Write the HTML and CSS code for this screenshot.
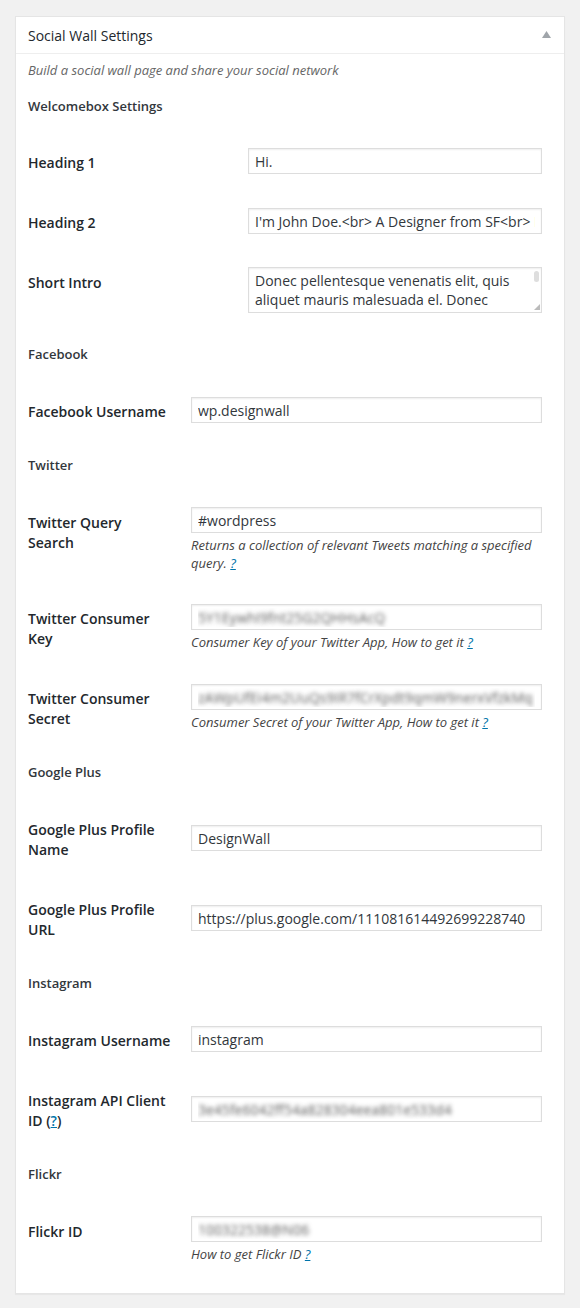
FILE: index.html
```html
<!DOCTYPE html>
<html lang="en">
<head>
<meta charset="utf-8">
<title>Social Wall Settings</title>
<link rel="stylesheet" href="styles.css">
</head>
<body>
<div class="postbox">
  <div class="hndle">
    <span class="hndle-title">Social Wall Settings</span>
    <svg class="toggle" width="9" height="7" viewBox="0 0 9 7" aria-hidden="true"><polygon points="4.5,0 9,7 0,7" fill="#a0a5aa"/></svg>
  </div>
  <div class="inside">
    <p class="intro">Build a social wall page and share your social network</p>

    <h4 class="section first">Welcomebox Settings</h4>
    <div class="form wide">
      <div class="row">
        <label class="th">Heading 1</label>
        <div class="td"><input class="field" type="text" value="Hi."></div>
      </div>
      <div class="row">
        <label class="th">Heading 2</label>
        <div class="td"><input class="field" type="text" value="I'm John Doe.<br> A Designer from SF<br> Living in New York"></div>
      </div>
      <div class="row">
        <label class="th">Short Intro</label>
        <div class="td">
          <div class="area-wrap">
            <textarea class="field area">Donec pellentesque venenatis elit, quis aliquet mauris malesuada el. Donec ullamcorper dictum luctus. Suspendisse potenti. Integer feugiat semper purus, ut pulvinar nulla luctus nec. Curabitur sed magna vitae tellus volutpat hendrerit. Nam tempor augue sit amet lorem tincidunt, vitae faucibus nisl rhoncus.</textarea>
            <span class="thumb"></span>
            <span class="grip"></span>
          </div>
        </div>
      </div>
    </div>

    <h4 class="section">Facebook</h4>
    <div class="form">
      <div class="row">
        <label class="th">Facebook Username</label>
        <div class="td"><input class="field" type="text" value="wp.designwall"></div>
      </div>
    </div>

    <h4 class="section">Twitter</h4>
    <div class="form">
      <div class="row">
        <label class="th">Twitter Query<br>Search</label>
        <div class="td">
          <input class="field" type="text" value="#wordpress">
          <p class="description"><span>Returns a collection of relevant Tweets matching a specified</span><br><span>query.</span> <a href="#">?</a></p>
        </div>
      </div>
      <div class="row">
        <label class="th">Twitter Consumer<br>Key</label>
        <div class="td">
          <input class="field blur" type="text" value="5Y1EywhI9fnt25G2QHHsAcQ">
          <p class="description">Consumer Key of your Twitter App, How to get it <a href="#">?</a></p>
        </div>
      </div>
      <div class="row">
        <label class="th">Twitter Consumer<br>Secret</label>
        <div class="td">
          <input class="field blur" type="text" value="zAWpUfEi4m2UuQs9IR7fCrXpdt9qmW9nerxVfzkMq">
          <p class="description">Consumer Secret of your Twitter App, How to get it <a href="#">?</a></p>
        </div>
      </div>
    </div>

    <h4 class="section">Google Plus</h4>
    <div class="form">
      <div class="row">
        <label class="th">Google Plus Profile<br>Name</label>
        <div class="td"><input class="field" type="text" value="DesignWall"></div>
      </div>
      <div class="row">
        <label class="th">Google Plus Profile<br>URL</label>
        <div class="td"><input class="field" type="text" value="https://plus.google.com/111081614492699228740"></div>
      </div>
    </div>

    <h4 class="section">Instagram</h4>
    <div class="form">
      <div class="row">
        <label class="th">Instagram Username</label>
        <div class="td"><input class="field" type="text" value="instagram"></div>
      </div>
      <div class="row">
        <label class="th">Instagram API Client<br>ID (<a href="#">?</a>)</label>
        <div class="td"><input class="field blur" type="text" value="3e45fe6042ff54a828304eea801e533d4"></div>
      </div>
    </div>

    <h4 class="section">Flickr</h4>
    <div class="form">
      <div class="row">
        <label class="th">Flickr ID</label>
        <div class="td">
          <input class="field blur" type="text" value="100322538@N06">
          <p class="description">How to get Flickr ID <a href="#">?</a></p>
        </div>
      </div>
    </div>
  </div>
</div>
</body>
</html>
```

FILE: styles.css
```css
html, body {
  margin: 0;
  padding: 0;
  background: #f1f1f1;
}

body {
  font-family: "Open Sans", "Noto Sans", "Liberation Sans", sans-serif;
  color: #444;
  font-size: 13px;
}

.postbox {
  margin: 16px 15px 16px;
  background: #fff;
  border: 1px solid #e5e5e5;
  box-shadow: 0 1px 1px rgba(0, 0, 0, 0.04);
}

.hndle {
  display: flex;
  align-items: center;
  justify-content: space-between;
  padding: 9px 13px 7px 12px;
  border-bottom: 1px solid #eee;
  font-size: 14px;
  line-height: 20px;
  color: #23282d;
}

.toggle {
  display: block;
  margin-top: -4px;
}

.inside {
  padding: 0 12px 15px;
}

.intro {
  margin: 6px 0 0;
  font-size: 13px;
  line-height: 20px;
  font-style: italic;
  color: #666;
}

.section {
  margin: 15px 0 16px;
  font-size: 13px;
  line-height: 20px;
  font-weight: 600;
  color: #32373c;
}

.section.first {
  margin-top: 16px;
  margin-bottom: 15px;
}

.form {
  --th: 153px;
}

.form.wide {
  --th: 210px;
}

.row {
  display: grid;
  grid-template-columns: var(--th) 1fr;
}

.th {
  align-self: start;
  padding: 22px 10px 18px 0;
  font-size: 14px;
  line-height: 20px;
  font-weight: 600;
  color: #23282d;
  white-space: nowrap;
}

.td {
  align-self: center;
  padding: 15px 10px;
  min-width: 0;
}

.field {
  display: block;
  box-sizing: border-box;
  width: 100%;
  height: 26px;
  margin: 1px 0;
  padding: 0 6px;
  border: 1px solid #ddd;
  border-radius: 0;
  box-shadow: inset 0 1px 2px rgba(0, 0, 0, 0.07);
  background: #fff;
  font-family: "Open Sans", "Noto Sans", "Liberation Sans", sans-serif;
  font-size: 14px;
  color: #32373c;
  outline: none;
}

.field.blur {
  color: transparent;
  text-shadow: 0 0 4px rgba(30, 30, 30, 0.7);
}

.area-wrap {
  position: relative;
}

.area {
  height: 46px;
  padding: 3px 14px 3px 6px;
  line-height: 19px;
  resize: none;
  overflow: hidden;
}

.thumb {
  position: absolute;
  top: 4px;
  right: 3px;
  width: 5px;
  height: 11px;
  border-radius: 3px;
  background: #dedede;
}

.grip {
  position: absolute;
  right: 2px;
  bottom: 3px;
  width: 6px;
  height: 6px;
  background-image: radial-gradient(circle, #bbb 0.8px, transparent 1px);
  background-size: 2px 2px;
  clip-path: polygon(100% 0, 100% 100%, 0 100%);
}

.description {
  margin: 3px 0 0;
  font-size: 13px;
  line-height: 18px;
  font-style: italic;
  color: #444;
}

a {
  color: #0073aa;
  text-decoration: underline;
}
```
